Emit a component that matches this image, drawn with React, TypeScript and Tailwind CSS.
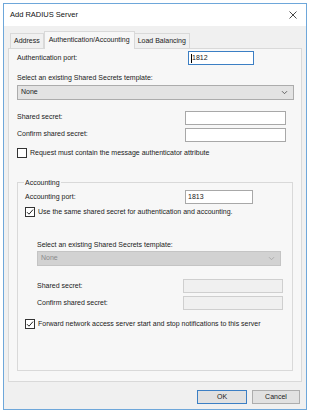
import React from "react";

const font = { fontFamily: '"Liberation Sans", Arial, sans-serif' };

function TextBox({ w, value, focused, disabled }: { w: string; value?: string; focused?: boolean; disabled?: boolean }) {
  return (
    <div
      className={`${w} h-[14px] border flex items-center px-[2px] text-[7px] ${
        focused ? "border-[#3c7fc4] bg-white" : disabled ? "border-[#cfcfcf] bg-[#f0f0f0]" : "border-[#a8a8a8] bg-white"
      }`}
    >
      {focused && <span className="w-px h-[9px] bg-black" />}
      {value}
    </div>
  );
}

function Combo({ disabled }: { disabled?: boolean }) {
  return (
    <div
      className={`h-[15px] border flex items-center justify-between pl-[3px] pr-[5px] text-[7px] ${
        disabled ? "border-[#c4c4c4] bg-[#d2d2d2] text-[#8a8a8a]" : "border-[#acacac] bg-[#e3e3e3] text-[#1a1a1a]"
      }`}
    >
      <span>None</span>
      <svg width="7" height="5" viewBox="0 0 7 5">
        <path d="M1 1.2 L3.5 3.7 L6 1.2" fill="none" stroke={disabled ? "#a8a8a8" : "#555"} strokeWidth="0.9" />
      </svg>
    </div>
  );
}

function Check({ checked, label }: { checked?: boolean; label: string }) {
  return (
    <div className="flex items-center gap-[3px] text-[7px] text-[#1a1a1a] whitespace-nowrap">
      <div className="w-[10px] h-[10px] border border-[#333] bg-white flex items-center justify-center shrink-0">
        {checked && (
          <svg width="8" height="8" viewBox="0 0 8 8">
            <path d="M1 4.2 L3 6.2 L7 1.6" fill="none" stroke="#222" strokeWidth="1" />
          </svg>
        )}
      </div>
      <span>{label}</span>
    </div>
  );
}

export default function App() {
  return (
    <div className="w-[320px] h-[414px] bg-white pt-[3px] pl-[3px]" style={font}>
      <div className="w-[304px] h-[407px] border border-[#6ea7da] flex flex-col">
        {/* Title bar */}
        <div className="h-[22px] bg-white flex items-center justify-between pl-[6px] pr-[9px] shrink-0">
          <span className="text-[7.5px] text-[#111]">Add RADIUS Server</span>
          <svg width="8" height="8" viewBox="0 0 8 8">
            <path d="M0.5 0.5 L7.5 7.5 M7.5 0.5 L0.5 7.5" stroke="#333" strokeWidth="0.9" />
          </svg>
        </div>

        <div className="flex-1 bg-[#f0f0f0] px-[4px] pt-[4px] flex flex-col">
          {/* Tabs */}
          <div className="flex items-end h-[18px] text-[7px] text-[#1a1a1a] pl-[2px]">
            <div className="h-[15px] px-[3px] border border-b-0 border-[#d9d9d9] flex items-center">Address</div>
            <div className="h-[18px] px-[4px] border border-b-0 border-[#d9d9d9] bg-[#f7f7f7] flex items-center -mb-px relative z-10">
              Authentication/Accounting
            </div>
            <div className="h-[15px] px-[3px] border border-b-0 border-l-0 border-[#d9d9d9] flex items-center">Load Balancing</div>
          </div>

          {/* Panel */}
          <div className="h-[334px] border border-[#d9d9d9] bg-[#f7f7f7] pl-[8px] pr-[7px] pt-[2px] text-[7px] text-[#1a1a1a]">
            <div className="flex items-center">
              <span className="w-[171px]">Authentication port:</span>
              <TextBox w="w-[66px]" value="1812" focused />
            </div>
            <div className="mt-[8px]">Select an existing Shared Secrets template:</div>
            <div className="mt-[1px]">
              <Combo />
            </div>
            <div className="flex items-center mt-[11px]">
              <span className="w-[168px]">Shared secret:</span>
              <TextBox w="w-[101px]" />
            </div>
            <div className="flex items-center mt-[3px]">
              <span className="w-[168px]">Confirm shared secret:</span>
              <TextBox w="w-[101px]" />
            </div>
            <div className="mt-[6px]">
              <Check label="Request must contain the message authenticator attribute" />
            </div>

            {/* Accounting group */}
            <div className="mt-[24px] mr-[1px] h-[189px] border border-[#d9d9d9] relative pl-[7px] pt-[7px]">
              <span className="absolute -top-[5px] left-[6px] px-[1px] bg-[#f7f7f7] leading-[9px]">Accounting</span>
              <div className="flex items-center">
                <span className="w-[160px]">Accounting port:</span>
                <TextBox w="w-[68px]" value="1813" />
              </div>
              <div className="mt-[3px]">
                <Check checked label="Use the same shared secret for authentication and accounting." />
              </div>
              <div className="ml-[12px] mt-[22px]">
                <div>Select an existing Shared Secrets template:</div>
                <div className="mt-[1px] w-[244px]">
                  <Combo disabled />
                </div>
                <div className="flex items-center mt-[13px]">
                  <span className="w-[146px]">Shared secret:</span>
                  <TextBox w="w-[100px]" disabled />
                </div>
                <div className="flex items-center mt-[3px]">
                  <span className="w-[146px]">Confirm shared secret:</span>
                  <TextBox w="w-[100px]" disabled />
                </div>
              </div>
              <div className="mt-[9px]">
                <Check checked label="Forward network access server start and stop notifications to this server" />
              </div>
            </div>
          </div>

          {/* Buttons */}
          <div className="flex justify-end gap-[5px] mt-[8px] pr-[2px] text-[7px] text-[#1a1a1a]">
            <div className="w-[50px] h-[14px] border border-[#3c7fc4] bg-[#e1e1e1] flex items-center justify-center">OK</div>
            <div className="w-[48px] h-[14px] border border-[#adadad] bg-[#e1e1e1] flex items-center justify-center">Cancel</div>
          </div>
        </div>
      </div>
    </div>
  );
}
